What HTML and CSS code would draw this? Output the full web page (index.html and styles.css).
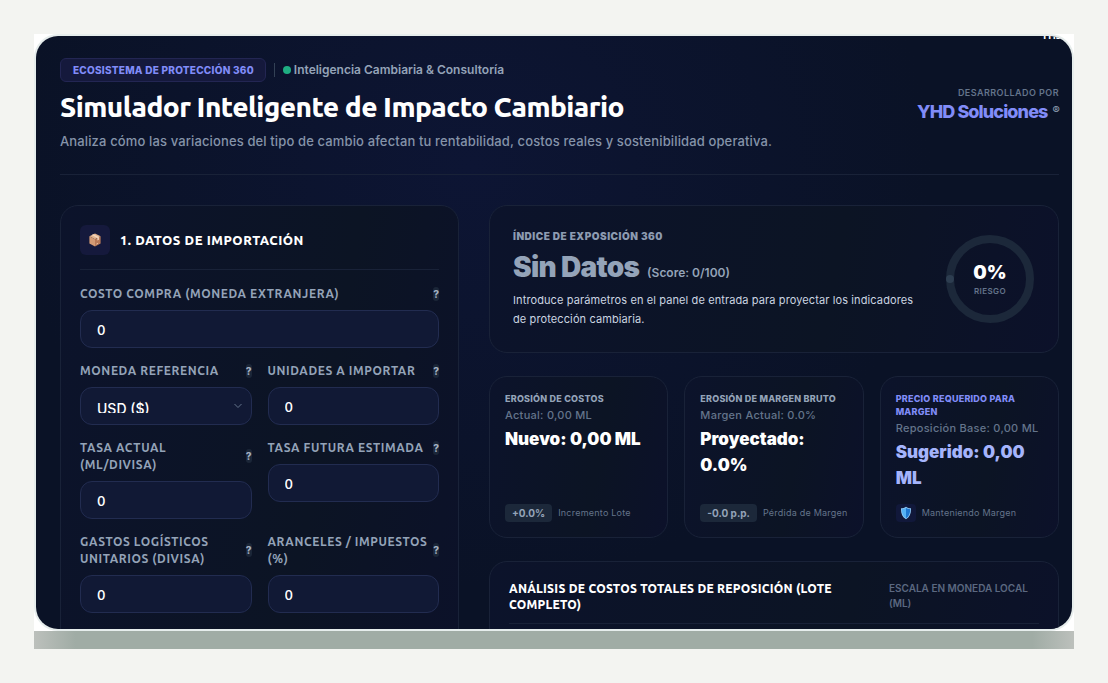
FILE: index.html
```html
<!DOCTYPE html>
<html lang="es">
<head>
<meta charset="utf-8">
<meta name="viewport" content="width=device-width, initial-scale=1">
<title>Simulador Inteligente de Impacto Cambiario</title>
<link rel="stylesheet" href="styles.css">
</head>
<body>
<div class="frame">
  <main class="panel">
    <span class="corner-tag">YHD</span>
    <header class="top">
      <div class="intro">
        <div class="meta">
          <span class="badge">ECOSISTEMA DE PROTECCIÓN 360</span>
          <span class="bar"></span>
          <span class="status"><span class="dot"></span>Inteligencia Cambiaria &amp; Consultoría</span>
        </div>
        <h1>Simulador Inteligente de Impacto Cambiario</h1>
        <p class="lead">Analiza cómo las variaciones del tipo de cambio afectan tu rentabilidad, costos reales y sostenibilidad operativa.</p>
      </div>
      <div class="brand">
        <span class="by">DESARROLLADO POR</span>
        <span class="name">YHD Soluciones <small>®</small></span>
      </div>
    </header>
    <div class="columns">
      <form class="card form">
        <div class="form-head">
          <span class="icon-box">
            <svg width="14" height="14" viewBox="0 0 14 14" aria-hidden="true">
              <path d="M7 0.5 12.6 3.2 7 6.2 1.4 3.2z" fill="#e3b48f"/>
              <path d="M1.4 3.2 7 6.2V13.5L1.4 10.5z" fill="#d39a74"/>
              <path d="M12.6 3.2 7 6.2V13.5l5.6-3z" fill="#b97a58"/>
              <path d="M3.7 2.1 9.4 5V7.6l1.5-.8V4.1L5.3 1.3z" fill="#f3d6bd"/>
              <path d="M8.3 11.2l1.8-1" stroke="#f0cdb0" stroke-width=".8"/>
            </svg>
          </span>
          <h2>1. DATOS DE IMPORTACIÓN</h2>
        </div>
        <div class="fields">
          <div class="field wide">
            <div class="label"><label for="costo">COSTO COMPRA (MONEDA EXTRANJERA)</label><button type="button" class="help">?</button></div>
            <input id="costo" type="text" inputmode="decimal" value="0">
          </div>
          <div class="field">
            <div class="label"><label for="moneda">MONEDA REFERENCIA</label><button type="button" class="help">?</button></div>
            <div class="select-wrap">
              <select id="moneda"><option>USD ($)</option><option>EUR (€)</option></select>
              <svg class="chevron" width="10" height="6" viewBox="0 0 10 6" aria-hidden="true"><path d="M1.5 1 5 4.5 8.5 1" fill="none" stroke="#64748b" stroke-width="1"/></svg>
            </div>
          </div>
          <div class="field">
            <div class="label"><label for="unidades">UNIDADES A IMPORTAR</label><button type="button" class="help">?</button></div>
            <input id="unidades" type="text" inputmode="numeric" value="0">
          </div>
          <div class="field">
            <div class="label"><label for="tasa">TASA ACTUAL (ML/DIVISA)</label><button type="button" class="help">?</button></div>
            <input id="tasa" type="text" inputmode="decimal" value="0">
          </div>
          <div class="field">
            <div class="label"><label for="futura">TASA FUTURA ESTIMADA</label><button type="button" class="help">?</button></div>
            <input id="futura" type="text" inputmode="decimal" value="0">
          </div>
          <div class="field">
            <div class="label"><label for="gastos">GASTOS LOGÍSTICOS UNITARIOS (DIVISA)</label><button type="button" class="help">?</button></div>
            <input id="gastos" type="text" inputmode="decimal" value="0">
          </div>
          <div class="field">
            <div class="label"><label for="aranceles">ARANCELES / IMPUESTOS (%)</label><button type="button" class="help">?</button></div>
            <input id="aranceles" type="text" inputmode="decimal" value="0">
          </div>
        </div>
      </form>
      <div class="results">
        <section class="card index">
          <div class="index-text">
            <h3>ÍNDICE DE EXPOSICIÓN 360</h3>
            <p class="level">Sin Datos <span>(Score: 0/100)</span></p>
            <p class="hint">Introduce parámetros en el panel de entrada para proyectar los indicadores de protección cambiaria.</p>
          </div>
          <div class="gauge">
            <svg width="88" height="88" viewBox="0 0 88 88" aria-hidden="true">
              <circle cx="44" cy="44" r="40" fill="none" stroke="#1c283a" stroke-width="8"/>
              <circle cx="4" cy="44" r="4" fill="#2d3d50"/>
            </svg>
            <div class="gauge-text"><strong>0%</strong><span>RIESGO</span></div>
          </div>
        </section>
        <div class="kpis">
          <section class="card kpi">
            <h4>EROSIÓN DE COSTOS</h4>
            <p class="now">Actual: 0,00 ML</p>
            <p class="value">Nuevo: 0,00 ML</p>
            <div class="foot"><span class="chip">+0.0%</span>Incremento Lote</div>
          </section>
          <section class="card kpi">
            <h4>EROSIÓN DE MARGEN BRUTO</h4>
            <p class="now">Margen Actual: 0.0%</p>
            <p class="value">Proyectado: 0.0%</p>
            <div class="foot"><span class="chip">-0.0 p.p.</span>Pérdida de Margen</div>
          </section>
          <section class="card kpi accent">
            <h4>PRECIO REQUERIDO PARA MARGEN</h4>
            <p class="now">Reposición Base: 0,00 ML</p>
            <p class="value">Sugerido: 0,00 ML</p>
            <div class="foot">
              <span class="shield">
                <svg width="12" height="14" viewBox="0 0 12 14" aria-hidden="true">
                  <path d="M6 .7C7.500 1.900 9.300 2.300 11 2.300 11.200 7.500 9.800 11.200 6 13.300 2.200 11.200.8 7.500 1 2.300 2.700 2.300 4.500 1.900 6 .7z" fill="#8ec9f5"/>
                  <path d="M6 1.700C7.300 2.700 8.700 3.100 10.200 3.200 10.200 7.300 9.100 10.300 6 12.300z" fill="#1f78d1"/>
                  <path d="M6 1.700C4.700 2.700 3.300 3.100 1.800 3.200 1.800 7.300 2.900 10.300 6 12.300z" fill="#55b2f5"/>
                </svg>
              </span>Manteniendo Margen</div>
          </section>
        </div>
        <section class="card analysis">
          <div class="analysis-head">
            <h2>ANÁLISIS DE COSTOS TOTALES DE REPOSICIÓN (LOTE COMPLETO)</h2>
            <span>ESCALA EN MONEDA LOCAL (ML)</span>
          </div>
        </section>
      </div>
    </div>
  </main>
  <div class="base"></div>
</div>
</body>
</html>
```
FILE: styles.css
```css
* { box-sizing: border-box; }
body, h1, h2, h3, h4, p { margin: 0; }

body {
  padding: 34px;
  background: #f3f4f1;
  font-family: Inter, "Liberation Sans", sans-serif;
  color: #fff;
}

.frame {
  display: flex;
  flex-direction: column;
  height: calc(100vh - 68px);
  background: #fff;
}

.panel {
  position: relative;
  flex: 1;
  min-height: 0;
  margin: 2px;
  padding: 22px 13px 0 24px;
  border-radius: 22px;
  overflow: hidden;
  background: radial-gradient(ellipse 460px 420px at 42% 22%, #0d1534, #0a1226);
  box-shadow: 0 0 0 2px #e6edec;
}

.base {
  flex: none;
  height: 18px;
  background: linear-gradient(90deg, #bcc0bc, #a0aca5 4%, #a0aca5 96%, #bcc0bc);
}

.corner-tag {
  position: absolute;
  top: -7px;
  right: 9px;
  font-size: 10px;
  line-height: 12px;
  font-weight: 700;
}

/* Header */
.top {
  display: flex;
  justify-content: space-between;
  align-items: center;
  padding-bottom: 23px;
  border-bottom: 1px solid #192238;
}
.meta { display: flex; align-items: center; }
.badge {
  padding: 4px 11px 4px 12px;
  border: 1px solid #232653;
  border-radius: 6px;
  background: #15193c;
  color: #818cf8;
  font-size: 10px;
  line-height: 14px;
  font-weight: 800;
  letter-spacing: 0.025em;
}
.bar { width: 1px; height: 14px; margin: 0 8px; background: #334155; }
.status {
  display: flex;
  align-items: center;
  gap: 3px;
  color: #94a3b8;
  font-size: 12px;
  line-height: 16px;
  font-weight: 600;
}
.dot { width: 8px; height: 8px; border-radius: 50%; background: #1fae82; }

h1, h2, .label, input { font-family: Ubuntu, "Noto Sans", sans-serif; }
h1 {
  margin-top: 6px;
  font-size: 28px;
  line-height: 38px;
  font-weight: 900;
  letter-spacing: -0.02em;
}
.lead {
  margin-top: 5px;
  color: #8593a9;
  font-size: 13px;
  line-height: 20px;
  font-weight: 500;
  letter-spacing: 0.01em;
}

.brand { display: flex; flex-direction: column; align-items: flex-end; }
.by { color: #64748b; font-size: 9px; line-height: 14px; font-weight: 600; letter-spacing: 0.05em; }
.name { color: #818cf8; font-size: 18px; line-height: 24px; font-weight: 800; letter-spacing: -0.05em; }
.name small { margin-left: 2px; color: #94a3b8; font-size: 11px; line-height: 10px; font-weight: 400; vertical-align: 4px; }

/* Columns */
.columns {
  display: grid;
  grid-template-columns: 7fr 10fr;
  gap: 30px;
  margin-top: 30px;
}
.card {
  border: 1px solid #192238;
  border-radius: 18px;
  background: linear-gradient(100deg, #0c132b, #0c1424 60%, #0c112a);
}

.form { padding: 19px; height: 600px; }
.form-head {
  display: flex;
  align-items: center;
  gap: 10px;
  padding-bottom: 14px;
  border-bottom: 1px solid #192238;
}
.icon-box {
  display: grid;
  place-items: center;
  width: 30px;
  height: 30px;
  border-radius: 6px;
  background: #15193c;
}
.form-head h2 { font-size: 13px; line-height: 18px; font-weight: 900; letter-spacing: 0.04em; }

.fields {
  display: grid;
  grid-template-columns: 1fr 1fr;
  gap: 14px 16px;
  margin-top: 15px;
}
.wide { grid-column: 1 / -1; }
.field { display: flex; flex-direction: column; gap: 8px; min-width: 0; }
.label {
  display: flex;
  justify-content: space-between;
  align-items: center;
  gap: 4px;
  color: #94a3b8;
  font-size: 12px;
  line-height: 17px;
  font-weight: 700;
  letter-spacing: 0.05em;
}
.help {
  flex: none;
  padding: 0;
  border: 0;
  border-radius: 4px;
  background: #1b2638;
  color: #a3afc0;
  font-family: Inter, sans-serif;
  font-size: 10px;
  line-height: 14px;
  font-weight: 800;
}
input, select {
  width: 100%;
  height: 38px;
  border: 1px solid #222c50;
  border-radius: 12px;
  background: #111935;
  color: #fff;
}
input { padding: 0 16px; font-size: 15px; font-weight: 500; }
.select-wrap { position: relative; display: flex; }
select {
  appearance: none;
  padding: 12px 28px 11px 16px;
  font-family: Inter, sans-serif;
  font-size: 14px;
  font-weight: 500;
}
.chevron { position: absolute; top: 16px; right: 9px; pointer-events: none; }

/* Results */
.results { display: flex; flex-direction: column; gap: 23px; }
.index {
  display: flex;
  align-items: center;
  justify-content: space-between;
  gap: 28px;
  padding: 23px 24px 23px 23px;
}
h3 { color: #8d9bb1; font-size: 10px; line-height: 14px; font-weight: 900; letter-spacing: 0.05em; }
.level {
  margin-top: 7px;
  color: #94a3b8;
  font-size: 28px;
  line-height: 34px;
  font-weight: 900;
  letter-spacing: -0.025em;
}
.level span { margin-left: 3px; font-size: 12px; line-height: 12px; font-weight: 600; letter-spacing: 0; }
.hint { margin-top: 7px; color: #cbd5e1; font-size: 11px; line-height: 19px; letter-spacing: 0.01em; }
.gauge { display: grid; flex: none; place-items: center; }
.gauge > * { grid-area: 1 / 1; }
.gauge-text { display: flex; flex-direction: column; align-items: center; }
.gauge strong { font-size: 19px; line-height: 24px; font-weight: 900; }
.gauge-text span { color: #64748b; font-size: 8px; line-height: 12px; font-weight: 600; letter-spacing: 0.05em; }

.kpis { display: grid; grid-template-columns: repeat(3, minmax(0, 1fr)); gap: 16px; }
.kpi { display: flex; flex-direction: column; min-height: 162px; padding: 15px; }
h4 { color: #94a3b8; font-size: 9px; line-height: 13px; font-weight: 800; letter-spacing: 0.025em; }
.now {
  margin-top: 2px;
  color: #64748b;
  font-size: 11px;
  line-height: 17px;
  font-weight: 500;
  letter-spacing: 0.025em;
}
.value { margin-top: 2px; font-size: 17px; line-height: 26px; font-weight: 900; }
.accent h4 { color: #818cf8; }
.accent .value { color: #a5b4fc; }
.foot {
  display: flex;
  align-items: center;
  gap: 6px;
  margin-top: auto;
  color: #64748b;
  font-size: 9px;
  line-height: 18px;
  letter-spacing: 0.025em;
  white-space: nowrap;
}
.chip {
  padding: 0 7px;
  border-radius: 4px;
  background: #1c283a;
  color: #94a3b8;
  font-size: 10px;
  font-weight: 700;
  letter-spacing: 0;
}
.shield {
  display: grid;
  place-items: center;
  width: 20px;
  height: 18px;
  border-radius: 4px;
  background: #11183a;
}

.analysis { padding: 19px; height: 260px; }
.analysis-head {
  display: grid;
  grid-template-columns: 1fr 150px;
  gap: 40px;
  padding-bottom: 10px;
  border-bottom: 1px solid #192238;
}
.analysis h2 { font-size: 12px; line-height: 16px; font-weight: 800; letter-spacing: 0.02em; }
.analysis span { color: #5b6880; font-size: 10px; line-height: 15px; font-weight: 600; }
```
